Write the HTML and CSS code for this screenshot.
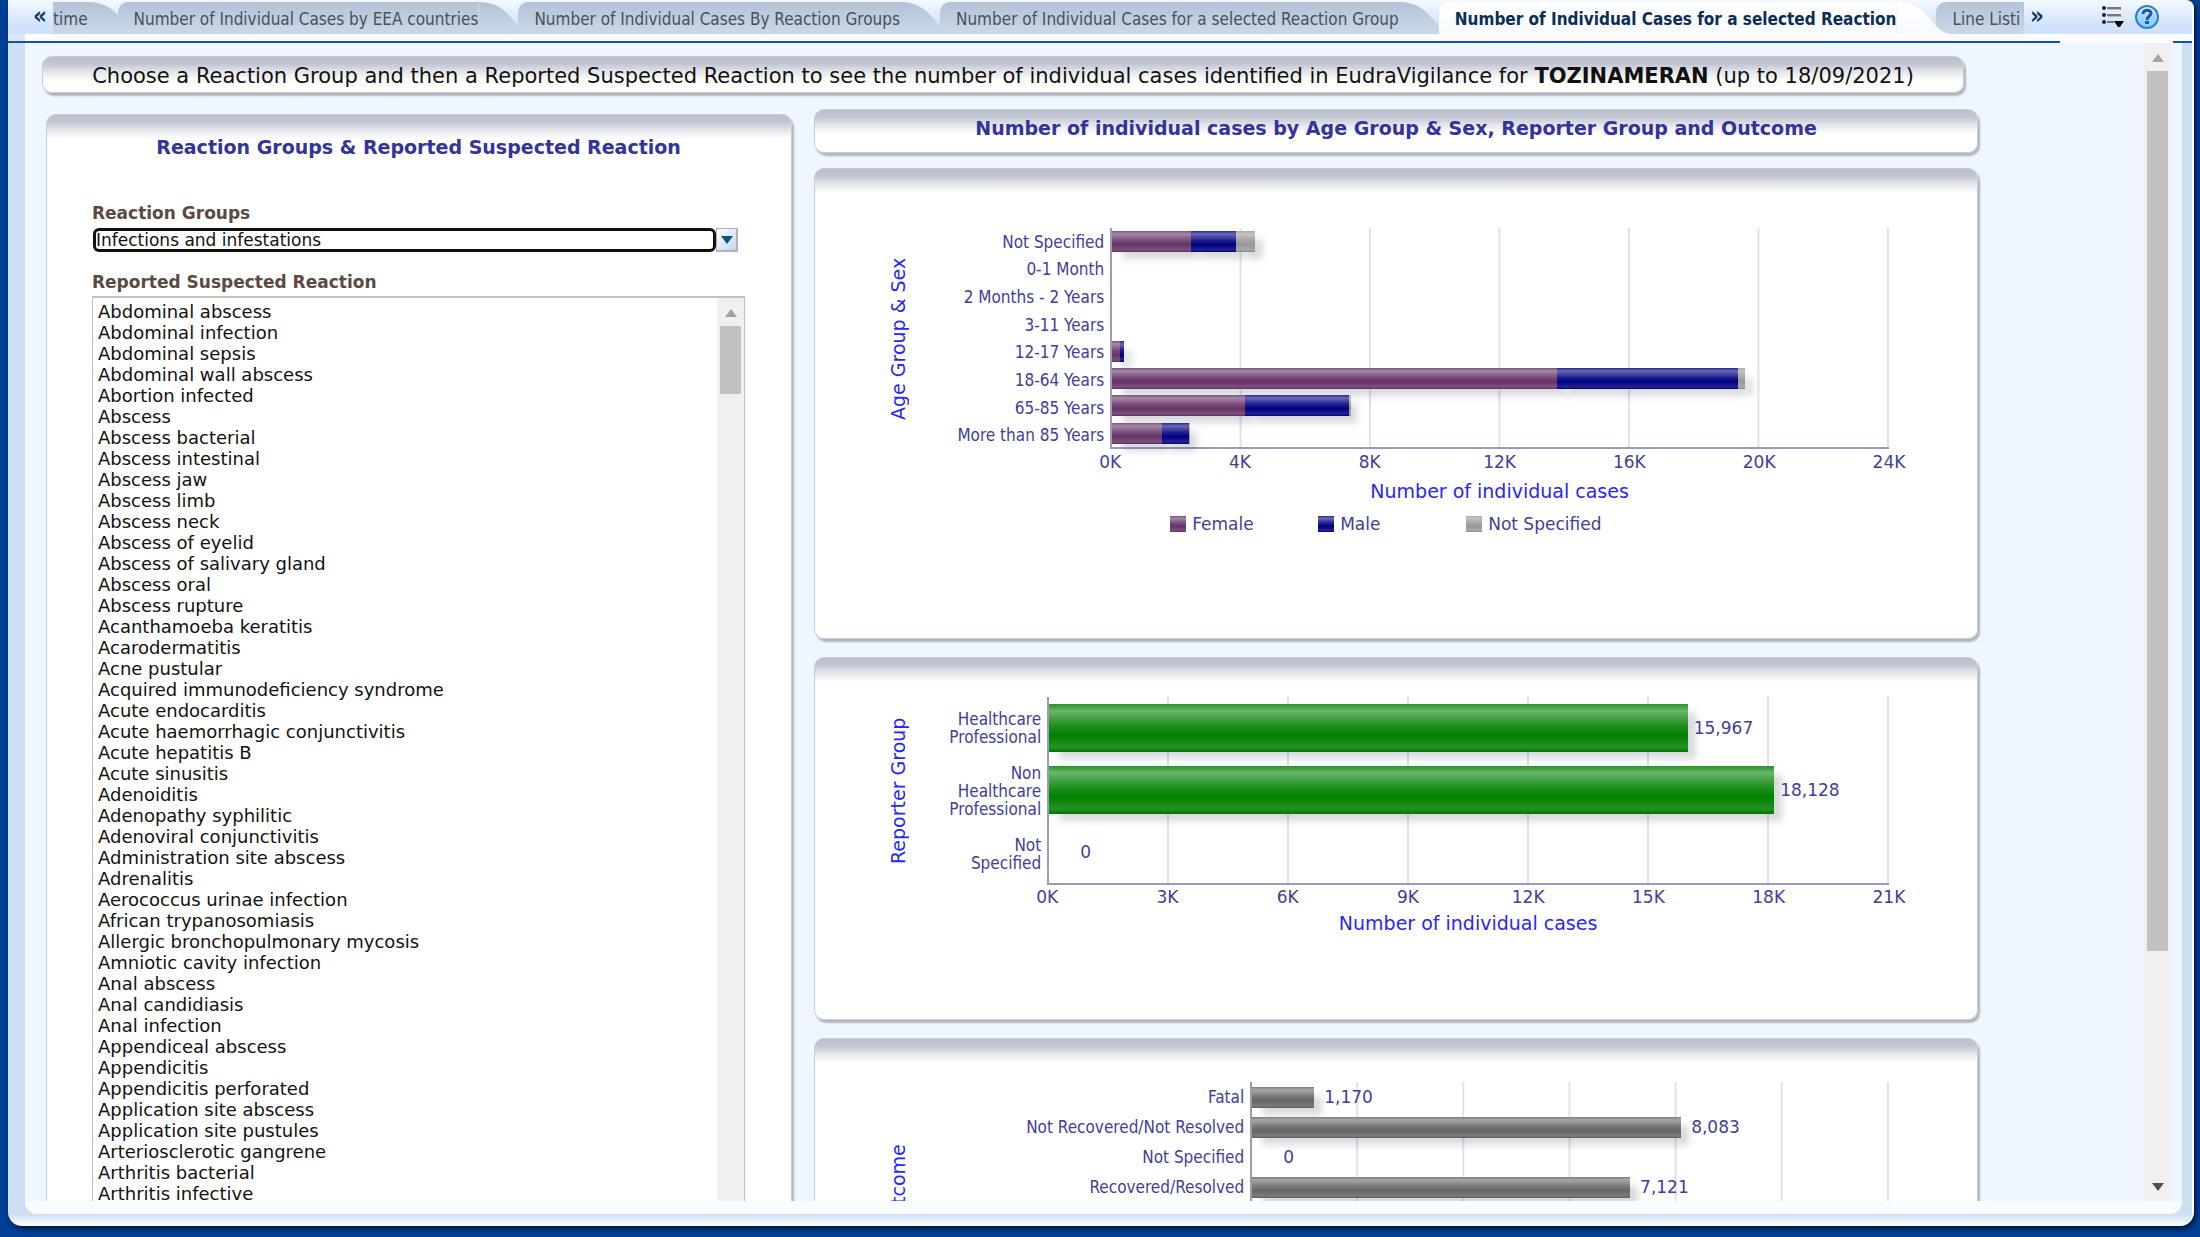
FILE: index.html
```html
<!DOCTYPE html>
<html lang="en">
<head>
  <meta charset="UTF-8" />
  <meta name="viewport" content="width=device-width, initial-scale=1.0"/>
  <title>Number of Individual Cases for a selected Reaction</title>
  <link rel="stylesheet" href="styles.css">
</head>
<body>

<div class="window">

  <!-- Tabs -->
  <header class="topbar">
    <button class="scroll-btn" aria-label="Previous tabs">«</button>
    <nav class="tabs">
      <a class="tab cut" href="#">time</a>
      <a class="tab" href="#">Number of Individual Cases by EEA countries</a>
      <a class="tab" href="#">Number of Individual Cases By Reaction Groups</a>
      <a class="tab" href="#">Number of Individual Cases for a selected Reaction Group</a>
      <a class="tab active" href="#">Number of Individual Cases for a selected Reaction</a>
      <a class="tab" href="#">Line Listi</a>
    </nav>
    <button class="scroll-btn next" aria-label="Next tabs">»</button>
    <div class="tools">
      <button class="tool" aria-label="Page options">
        <svg width="24" height="24" viewBox="0 0 24 24">
          <g fill="#1c1a58"><circle cx="3" cy="4" r="2"/><circle cx="3" cy="11" r="2"/><circle cx="3" cy="18" r="2"/></g>
          <g fill="#777"><rect x="6" y="3" width="14" height="2"/><rect x="6" y="10" width="14" height="2"/><rect x="6" y="17" width="7" height="2"/></g>
          <g fill="#bbb"><rect x="7" y="5" width="14" height="1"/><rect x="7" y="12" width="14" height="1"/></g>
          <path d="M13 17h10l-4 6h-2z" fill="#000"/>
        </svg>
      </button>
      <button class="tool" aria-label="Help">
        <svg width="26" height="26" viewBox="0 0 26 26">
          <defs><linearGradient id="help" x1="0" y1="0" x2="0" y2="1"><stop offset="0" stop-color="#e2f4ff"/><stop offset=".5" stop-color="#9fd6ff"/><stop offset="1" stop-color="#7fd0ff"/></linearGradient></defs>
          <circle cx="13" cy="13" r="11" fill="url(#help)" stroke="#2f7fd0" stroke-width="2"/>
          <path d="M9 10C9 5 17 5 17 9.500C17 12 13 12 13 16" fill="none" stroke="#1c57ac" stroke-width="3"/>
          <rect x="11" y="17" width="4" height="3" fill="#1c57ac"/>
        </svg>
      </button>
    </div>
  </header>
  <div class="tab-rule"><i class="left"></i><i class="mid"></i><i class="gap"></i><i class="right"></i></div>

  <div class="viewport">
    <main class="page">

      <div class="panel banner">
        Choose a Reaction Group and then a Reported Suspected Reaction to see the number of individual cases identified in EudraVigilance for <b>TOZINAMERAN</b> (up to 18/09/2021)
      </div>

      <div class="columns">

        <!-- Filters -->
        <section class="panel filters">
          <h2>Reaction Groups &amp; Reported Suspected Reaction</h2>
          <label for="group">Reaction Groups</label>
          <div class="combo">
            <input type="text" id="group" value="Infections and infestations">
            <button aria-label="Open list"><svg width="12" height="8" viewBox="0 0 12 8"><path d="M0 0h12L6 8z" fill="#005a7c"/></svg></button>
          </div>
          <label for="reaction">Reported Suspected Reaction</label>
          <div class="listbox">
            <select id="reaction" size="43">
              <option>Abdominal abscess</option>
              <option>Abdominal infection</option>
              <option>Abdominal sepsis</option>
              <option>Abdominal wall abscess</option>
              <option>Abortion infected</option>
              <option>Abscess</option>
              <option>Abscess bacterial</option>
              <option>Abscess intestinal</option>
              <option>Abscess jaw</option>
              <option>Abscess limb</option>
              <option>Abscess neck</option>
              <option>Abscess of eyelid</option>
              <option>Abscess of salivary gland</option>
              <option>Abscess oral</option>
              <option>Abscess rupture</option>
              <option>Acanthamoeba keratitis</option>
              <option>Acarodermatitis</option>
              <option>Acne pustular</option>
              <option>Acquired immunodeficiency syndrome</option>
              <option>Acute endocarditis</option>
              <option>Acute haemorrhagic conjunctivitis</option>
              <option>Acute hepatitis B</option>
              <option>Acute sinusitis</option>
              <option>Adenoiditis</option>
              <option>Adenopathy syphilitic</option>
              <option>Adenoviral conjunctivitis</option>
              <option>Administration site abscess</option>
              <option>Adrenalitis</option>
              <option>Aerococcus urinae infection</option>
              <option>African trypanosomiasis</option>
              <option>Allergic bronchopulmonary mycosis</option>
              <option>Amniotic cavity infection</option>
              <option>Anal abscess</option>
              <option>Anal candidiasis</option>
              <option>Anal infection</option>
              <option>Appendiceal abscess</option>
              <option>Appendicitis</option>
              <option>Appendicitis perforated</option>
              <option>Application site abscess</option>
              <option>Application site pustules</option>
              <option>Arteriosclerotic gangrene</option>
              <option>Arthritis bacterial</option>
              <option>Arthritis infective</option>
            </select>
            <div class="scrollbar"><i class="up"></i><i class="thumb"></i></div>
          </div>
        </section>

        <!-- Charts -->
        <section class="charts">
          <div class="panel heading">
            <h2>Number of individual cases by Age Group &amp; Sex, Reporter Group and Outcome</h2>
          </div>

          <div class="panel age">
            <div class="chart" style="--max: 24000; --n: 6">
              <div class="y-title">Age Group &amp; Sex</div>
              <div class="names">
                <span>Not Specified</span><span>0-1 Month</span><span>2 Months - 2 Years</span><span>3-11 Years</span>
                <span>12-17 Years</span><span>18-64 Years</span><span>65-85 Years</span><span>More than 85 Years</span>
              </div>
              <div class="plot">
                <div class="row"><i class="bar female" style="--v: 2428"></i><i class="bar male" style="--v: 1393"></i><i class="bar none" style="--v: 580"></i></div>
                <div class="row"></div>
                <div class="row"></div>
                <div class="row"></div>
                <div class="row"><i class="bar female" style="--v: 235"></i><i class="bar male" style="--v: 136"></i></div>
                <div class="row"><i class="bar female" style="--v: 13754"></i><i class="bar male" style="--v: 5581"></i><i class="bar none" style="--v: 232"></i></div>
                <div class="row"><i class="bar female" style="--v: 4108"></i><i class="bar male" style="--v: 3197"></i><i class="bar none" style="--v: 62"></i></div>
                <div class="row"><i class="bar female" style="--v: 1529"></i><i class="bar male" style="--v: 849"></i><i class="bar none" style="--v: 25"></i></div>
              </div>
              <div class="ticks"><span>0K</span><span>4K</span><span>8K</span><span>12K</span><span>16K</span><span>20K</span><span>24K</span></div>
              <div class="x-title">Number of individual cases</div>
              <div class="legend">
                <span><i class="swatch female"></i>Female</span>
                <span><i class="swatch male"></i>Male</span>
                <span><i class="swatch none"></i>Not Specified</span>
              </div>
            </div>
          </div>

          <div class="panel reporter">
            <div class="chart" style="--max: 21000; --n: 7">
              <div class="y-title">Reporter Group</div>
              <div class="names">
                <span>Healthcare<br>Professional</span>
                <span>Non<br>Healthcare<br>Professional</span>
                <span>Not<br>Specified</span>
              </div>
              <div class="plot">
                <div class="row"><i class="bar green" style="--v: 15967"></i><b>15,967</b></div>
                <div class="row"><i class="bar green" style="--v: 18128"></i><b>18,128</b></div>
                <div class="row"><b class="zero">0</b></div>
              </div>
              <div class="ticks"><span>0K</span><span>3K</span><span>6K</span><span>9K</span><span>12K</span><span>15K</span><span>18K</span><span>21K</span></div>
              <div class="x-title">Number of individual cases</div>
            </div>
          </div>

          <div class="panel outcome">
            <div class="chart" style="--max: 12000; --n: 6">
              <div class="y-title">Outcome</div>
              <div class="names">
                <span>Fatal</span><span>Not Recovered/Not Resolved</span><span>Not Specified</span><span>Recovered/Resolved</span>
              </div>
              <div class="plot">
                <div class="row"><i class="bar grey" style="--v: 1170"></i><b>1,170</b></div>
                <div class="row"><i class="bar grey" style="--v: 8083"></i><b>8,083</b></div>
                <div class="row"><b class="zero">0</b></div>
                <div class="row"><i class="bar grey" style="--v: 7121"></i><b>7,121</b></div>
              </div>
            </div>
          </div>
        </section>

      </div>
    </main>
    <div class="scrollbar"><i class="up"></i><i class="thumb"></i><i class="down"></i></div>
  </div>

</div>

</body>
</html>
```
FILE: styles.css
```css
* { box-sizing: border-box; margin: 0; padding: 0; }
body {
  height: 100vh;
  padding: 0 6px 11px 8px;
  background: #003f96;
  font-family: "DejaVu Sans", Verdana, sans-serif;
  font-size: 17px;
  overflow: hidden;
}
button { border: 0; background: none; cursor: pointer; }
i { font-style: normal; }

.window {
  display: flex; flex-direction: column;
  height: 100%;
  background: linear-gradient(to top, #fff 0, #cddff2 12px);
  border-right: 2px solid #fff;
  border-radius: 0 8px 14px 14px;
  box-shadow: 2px 3px 5px #001838;
}

/* Tabs */
.topbar {
  display: flex; align-items: stretch;
  height: 34px; padding: 2px 32px 0 25px;
  background: linear-gradient(#f4f9ff, #cfe1fb 80%);
  border-radius: 0 8px 0 0;
}
.scroll-btn {
  width: 20px;
  font: bold 24px/26px "DejaVu Sans Condensed", "DejaVu Sans", sans-serif;
  color: #16366f;
  padding-bottom: 4px;
  text-align: left;
}
.scroll-btn.next { text-align: right; }
.scroll-btn + .tools { margin-left: 56px; }
.tabs { display: flex; flex: 1; overflow: hidden; }
.tab {
  position: relative;
  flex: none;
  height: 32px; padding-left: 16px; margin-right: 40px;
  border-radius: 10px 0 0 0;
  background: linear-gradient(#b2c3d7, #cbd8e8);
  color: #4a5058;
  font: 17px/34px "DejaVu Sans Condensed", "DejaVu Sans", Tahoma, sans-serif;
  font-stretch: condensed;
  text-decoration: none;
  white-space: nowrap;
}
/* sloping right shoulder, tucked under the next tab */
.tab::after {
  content: "";
  position: absolute; left: 100%; top: 0;
  width: 57px; height: 32px;
  background: inherit;
  clip-path: path("M0 0 C18 0 26 8 34 17 C40 24 44 32 57 32 L0 32Z");
}
.tab.cut { padding-left: 0; margin-right: 30px; border-radius: 0; }
.tab.active { z-index: 1; background: linear-gradient(#fff, #f6faff); color: #0c2d54; font-weight: bold; }
.tab:last-child { margin-right: 0; }
.tools { display: flex; gap: 8px; align-items: flex-start; }
.tool { width: 26px; height: 28px; padding-top: 2px; }

.tab-rule { display: flex; height: 9px; }
.tab-rule i { background: #fafcff; border-bottom: 2px solid #1551a6; }
.tab-rule .left { width: 17px; background: #dbe8f8; }
.tab-rule .mid { flex: 1; }
.tab-rule .gap { width: 113px; border-color: #fafcff; }
.tab-rule .right { width: 19px; }

/* Scrolled page */
.viewport {
  display: flex; flex: 1;
  min-height: 0;
  margin: 0 10px 12px 17px;
  padding-right: 11px;
  background: #eef6ff;
  border-bottom: 13px solid #fafbfe;
  border-radius: 0 0 12px 12px;
  overflow: hidden;
}
.page { flex: 1; min-width: 0; padding: 13px 0 0 17px; }
.scrollbar {
  display: flex; flex-direction: column; align-items: center;
  width: 27px;
  background: #f0f0f0;
}
.scrollbar .up, .scrollbar .down { width: 0; border: 6px solid transparent; }
.scrollbar .up { border-top: 0; border-bottom: 8px solid #a3a3a3; margin: 11px 0 9px; }
.scrollbar .down { border-bottom: 0; border-top: 8px solid #505050; margin: auto 0 10px; }
.scrollbar .thumb { width: 21px; height: 76%; background: #c1c1c1; }

.panel {
  background: linear-gradient(#bbc0cf 0, #c2c6d2 7px, #e4e6ea 15px, #fff 24px);
  border: 1px solid #c8ccd9;
  border-radius: 10px;
  box-shadow: 2px 3px 2px #b0b5bd;
}
h2 { color: #33339c; font-size: 19px; line-height: 24px; text-align: center; }

.banner {
  margin-right: 180px;
  height: 37px;
  font-size: 21px; line-height: 38px;
  text-align: center; white-space: nowrap;
  color: #111;
}
.columns {
  display: grid;
  grid-template-columns: 745fr 1162fr;
  column-gap: 22px;
  align-items: start;
  margin: 16px 166px 0 4px;
}

/* Filters */
.filters { height: 1200px; margin-top: 5px; padding: 20px 46px 0 45px; }
.filters h2 { margin-bottom: 42px; }
.filters label { display: block; color: #5c4a42; font-weight: bold; line-height: 24px; }
.combo { display: flex; margin: 3px 7px 18px 1px; }
.combo input {
  flex: 1; min-width: 0; height: 24px;
  border: 3px solid #101010; border-radius: 6px;
  outline: 0;
  font: 17px/18px "DejaVu Sans", Verdana, sans-serif;
  color: #111;
}
.combo button {
  width: 22px; height: 24px;
  border: 1px solid #a9b3c1; border-width: 1px 2px 2px 1px;
  background: linear-gradient(135deg, #fff, #c3d5ec);
}
.listbox { display: flex; margin-top: 2px; border: 2px solid #c2c2bd; border-width: 2px 1px; height: 960px; }
.listbox select {
  flex: 1; min-width: 0;
  padding: 3px 0 0;
  border: 0; outline: 0;
  background: #fff;
  overflow: hidden;
  font: 18px/21px "DejaVu Sans", Verdana, sans-serif;
  color: #111;
}
.listbox option { min-height: 0; height: 21px; padding: 0 5px; line-height: 21px; }
.listbox .thumb { height: 68px; }

/* Charts */
.charts { display: flex; flex-direction: column; gap: 18px; }
.heading { height: 44px; padding-top: 6px; margin-bottom: -3px; }
.age { height: 471px; padding-top: 59px; }
.reporter { height: 363px; padding-top: 39px; }
.outcome { height: 420px; padding-top: 43px; }
.chart { display: grid; padding: 0 88px 0 73px; color: #40409c; }
.age .chart { grid-template: 221px 26px 34px 30px / 17px 205px 1fr; }
.reporter .chart { grid-template: 188px 24px 28px / 25px 134px 1fr; }
.outcome .chart { grid-template: 212px / 24px 338px 1fr; }
.y-title, .x-title { color: #2626ff; font-size: 19px; }
.y-title { writing-mode: vertical-rl; transform: rotate(180deg); text-align: center; line-height: 20px; }
.x-title { grid-column: 3; text-align: center; line-height: 32px; }
.reporter .x-title { line-height: 28px; }
.names {
  display: flex; flex-direction: column;
  padding-right: 6px;
  font: 17px/18px "DejaVu Sans Condensed", "DejaVu Sans", Tahoma, sans-serif;
  font-stretch: condensed;
  text-align: right;
}
.names span { flex: 1; align-content: center; white-space: nowrap; }
.plot {
  display: flex; flex-direction: column;
  border-left: 2px solid #9a9abc; border-bottom: 2px solid #9a9abc;
  background: linear-gradient(to left, #e1e1eb 2px, transparent 2px) 0 0 / calc(100% / var(--n)) 100%;
}
.row { display: flex; flex: 1; align-items: center; }
.outcome .row, .outcome .names span { flex: 0 0 30px; }
.row b { font-weight: normal; margin-left: 6px; }
.outcome .row b { margin-left: 10px; }
.row .zero, .outcome .row .zero { margin-left: 31px; }
.bar {
  flex: none;
  width: calc(var(--v) / var(--max) * 100%);
  height: 21px;
  box-shadow: 9px 8px 7px -1px rgba(60, 70, 90, .2);
}
.reporter .bar { height: 48px; }
.bar, .swatch {
  background-image: linear-gradient(rgba(255,255,255,.15) 0, rgba(255,255,255,.42) 14%, rgba(255,255,255,.12) 45%, rgba(255,255,255,0) 65%, rgba(255,255,255,.14) 90%, rgba(0,0,0,.1) 100%);
}
.female { background-color: #663366; }
.male { background-color: #000080; }
.none { background-color: #999; }
.green { background-color: #008000; }
.grey { background-color: #666; }
.ticks { grid-column: 3; display: flex; justify-content: space-between; line-height: 26px; }
.reporter .ticks { line-height: 24px; }
.ticks span { display: flex; justify-content: center; width: 0; }
.legend { grid-column: 3; display: flex; margin-left: 60px; line-height: 30px; }
.legend span { display: flex; align-items: center; flex: 0 0 148px; white-space: nowrap; }
.swatch { width: 16px; height: 16px; margin-right: 6px; }
```
